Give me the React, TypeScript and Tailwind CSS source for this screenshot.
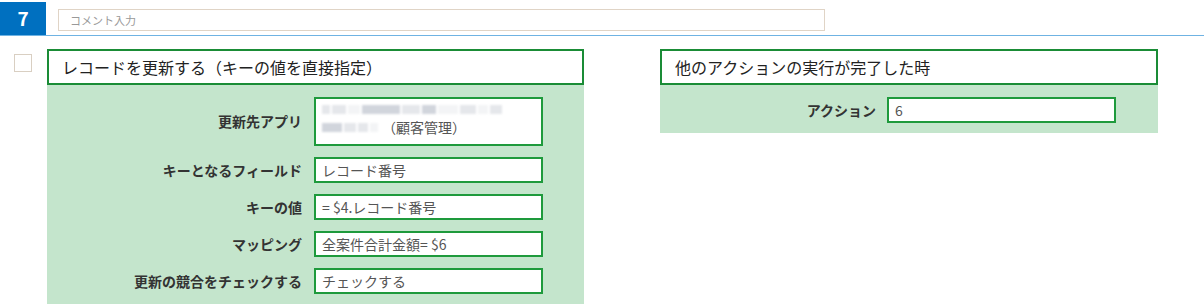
import React from "react";

const font = { fontFamily: '"Noto Sans CJK JP", "Noto Sans", sans-serif' };

function Blur({ w, shade }: { w: number; shade: string }) {
  return <span className={`inline-block h-[9px] ${shade}`} style={{ width: w }} />;
}

function Field({ label, children, tall }: { label: string; children: React.ReactNode; tall?: boolean }) {
  return (
    <div className="flex items-center">
      <div className="w-[267px] pr-[12px] text-right text-[14px] font-bold text-[#333]">{label}</div>
      <div
        className={`w-[229px] border-2 border-[#1e9a3c] bg-white px-[6px] text-[14px] text-[#555] ${
          tall ? "h-[49px] py-[2px] leading-[21px]" : "flex h-[26px] items-center"
        }`}
      >
        {children}
      </div>
    </div>
  );
}

export default function App() {
  return (
    <div className="h-[306px] w-[1204px] bg-white" style={font}>
      {/* top bar */}
      <div className="flex h-[36px] items-start border-b border-[#6fb3e3] pt-[2px]">
        <div className="flex h-[33px] w-[46px] items-center justify-center bg-[#0070c0] text-[19px] font-bold text-white">
          7
        </div>
        <div className="ml-[12px] mt-[7px] flex h-[22px] w-[767px] items-center border border-[#e0d4c6] px-[11px] text-[11px] text-[#999]">
          コメント入力
        </div>
      </div>

      <div className="flex items-start pt-[13px]">
        <div className="ml-[14px] mt-[5px] h-[18px] w-[18px] border border-[#d9cfc2] bg-white" />

        {/* left card */}
        <div className="ml-[15px] w-[537px]">
          <div className="flex h-[36px] items-center border-2 border-[#1a8c36] bg-white pl-[13px] text-[16px] text-[#222]">
            レコードを更新する（キーの値を直接指定）
          </div>
          <div className="flex flex-col gap-[11px] bg-[#c4e5cc] pb-[10px] pt-[12px]">
            <Field label="更新先アプリ" tall>
              <div className="flex items-center gap-[2px] pt-[4px] blur-[1px]">
                <Blur w={8} shade="bg-gray-200" />
                <Blur w={14} shade="bg-gray-200" />
                <Blur w={12} shade="bg-gray-100" />
                <Blur w={38} shade="bg-gray-300" />
                <Blur w={18} shade="bg-gray-200" />
                <Blur w={14} shade="bg-gray-300" />
                <Blur w={20} shade="bg-gray-100" />
                <Blur w={16} shade="bg-gray-200" />
                <Blur w={10} shade="bg-gray-100" />
                <Blur w={12} shade="bg-gray-200" />
              </div>
              <div className="flex items-center pt-[3px]">
                <span className="flex items-center gap-[2px] blur-[1px]">
                  <Blur w={20} shade="bg-gray-300" />
                  <Blur w={12} shade="bg-gray-200" />
                  <Blur w={10} shade="bg-gray-200" />
                  <Blur w={8} shade="bg-gray-100" />
                </span>
                <span className="ml-[4px]">（顧客管理）</span>
              </div>
            </Field>
            <Field label="キーとなるフィールド">レコード番号</Field>
            <Field label="キーの値">= $4.レコード番号</Field>
            <Field label="マッピング">全案件合計金額= $6</Field>
            <Field label="更新の競合をチェックする">チェックする</Field>
          </div>
        </div>

        {/* right card */}
        <div className="ml-[76px] w-[498px]">
          <div className="flex h-[36px] items-center border-2 border-[#1a8c36] bg-white pl-[13px] text-[16px] text-[#222]">
            他のアクションの実行が完了した時
          </div>
          <div className="flex items-center bg-[#c4e5cc] pb-[10px] pt-[12px]">
            <div className="w-[227px] pr-[11px] text-right text-[14px] font-bold text-[#333]">アクション</div>
            <div className="flex h-[26px] w-[229px] items-center border-2 border-[#1e9a3c] bg-white px-[6px] text-[14px] text-[#555]">
              6
            </div>
          </div>
        </div>
      </div>
    </div>
  );
}
